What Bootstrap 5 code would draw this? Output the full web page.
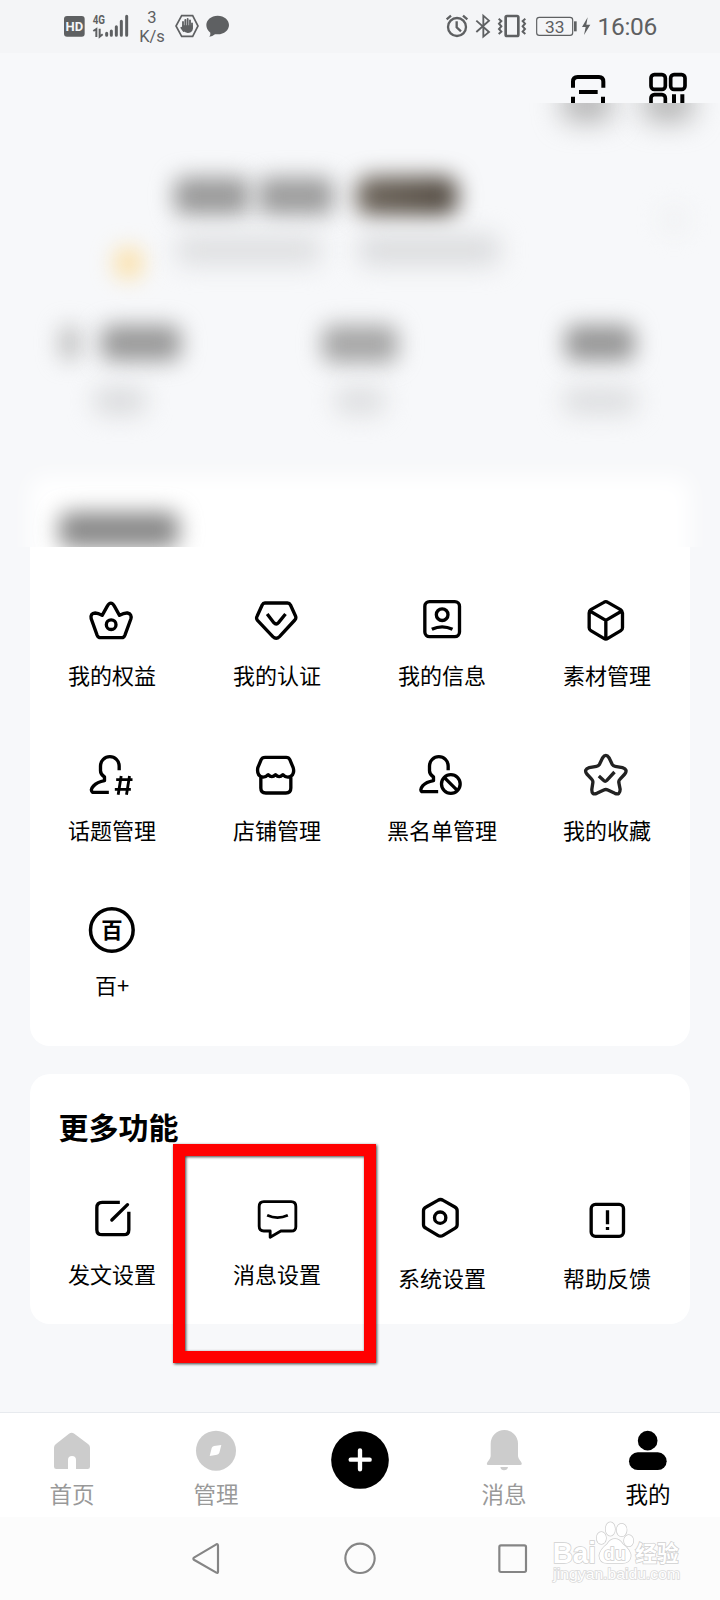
<!DOCTYPE html>
<html lang="zh-CN">
<head>
<meta charset="utf-8">
<meta name="viewport" content="width=device-width, initial-scale=1">
<title>我的</title>
<link rel="stylesheet" href="https://cdn.jsdelivr.net/npm/bootstrap@5.3.0/dist/css/bootstrap.min.css">
<style>
body{width:720px;height:1600px;margin:0;background:#f7f8fa;color:#000;font-family:"Noto Sans CJK SC",sans-serif;overflow:hidden}
svg{display:block;flex:none}
.ln{fill:none;stroke:#000;stroke-width:10;stroke-linejoin:round}
.status{height:53px;background:#f4f5f7;color:#5e6062;font-family:Roboto,sans-serif;padding:0 63px 0 60px}
.rate{width:36px;margin-left:2px;margin-right:2px;font-size:16.5px;line-height:19px;padding-top:8px}
.clock{font-size:24.5px;line-height:54px;letter-spacing:-.3px;margin-left:3px}
.topbar{height:50px}
.veil{height:444px}
.smudge{filter:blur(11px);border-radius:10px;flex:none}
.soft{filter:blur(12px)}
.shade{filter:blur(14px);width:50px;height:34px;background:#b0b0b0;border-radius:10px;margin-top:-16px}
.sheet-top{width:660px;margin:62px auto 0;height:110px;background:#fff;filter:blur(11px);border-radius:14px}
.sheet{width:660px;background:#fff;border:0}
.sheet-main{border-radius:0 0 20px 20px;padding:43px 0 44px}
.sheet-more{border-radius:20px;height:250px;margin-top:28px}
.tiles{display:grid;grid-template-columns:repeat(4,165px);row-gap:53px}
.tile{font-size:22px;line-height:32px}
.tile svg{margin-left:-1px}
.tile span{margin:8px 0 2px -1px}
.tile.low span{margin-top:12px}
.heading{font-size:30px;font-weight:700;line-height:40px;padding:32px 0 0 28.5px;margin:0 0 43px}
.marker{left:143px;top:70px;width:203px;height:219px;border:12px solid #f00;filter:drop-shadow(1px 1px 1.5px rgba(0,0,0,.75))}
.tabs{height:105px;margin-top:88px;background:#fff;border-top:1px solid #e7eaee;font-size:22.5px;line-height:30px;color:#999}
.tabs>div{width:144px;padding-top:12px}
.tabs span{margin-top:-2px}
.sysbar{height:83px;background:#fcfcfc;padding-top:21px}
.sysbar>div{width:153px}
.sys{fill:none;stroke:#858585;stroke-width:6.5;stroke-linejoin:round}
.credit{right:20px;top:3px}
</style>
</head>
<body class="d-flex flex-column">

<header class="status d-flex align-items-start">
  <svg width="72" height="53" viewBox="60 0 216 159">
    <rect x="72" y="48" width="62" height="62" rx="9" fill="#5e6062"/>
    <text x="103" y="92" text-anchor="middle" font-size="37" font-weight="700" textLength="53" lengthAdjust="spacingAndGlyphs" fill="#f4f5f7">HD</text>
    <text x="158" y="73" font-size="38" font-weight="700" textLength="37" lengthAdjust="spacingAndGlyphs" fill="#5e6062">4G</text>
    <path d="M160 93l9-6v24M179 86v24l9-7" fill="none" stroke="#5e6062" stroke-width="6"/>
    <path d="M200 100v6M214 93v13M229 80v26M244 64v42M260 49v57" fill="none" stroke="#5e6062" stroke-width="9" stroke-linecap="round"/>
  </svg>
  <div class="rate text-center">3<br>K/s</div>
  <svg width="62" height="53" viewBox="396 0 186 159">
    <path d="M425 47h33l16 31-16 31h-33l-17-31z" fill="none" stroke="#5e6062" stroke-width="5"/>
    <path d="M429 82V66M436 80V60M443 80V57M450 82V61M424 83l7 10M456 70v15" stroke="#5e6062" stroke-width="5.5" stroke-linecap="round"/>
    <path d="M427 76h31v14q-4 9-15 9-10-1-16-11z" fill="#5e6062"/>
    <path d="M533 47c20 0 34 13 34 28s-14 28-34 28l-8 0q-8 7-17 7 4-6 3-12-12-9-12-23c0-15 14-28 34-28z" fill="#5e6062"/>
  </svg>
  <svg class="ms-auto" width="150" height="53" viewBox="42 0 450 159">
    <g fill="none" stroke="#5e6062" stroke-width="7">
      <circle cx="81" cy="81" r="27"/><path d="M80 64v18l13 12M50 58l13-11M99 47l13 11"/>
      <path d="M139 62l38 34-17 14V47l17 15-38 34" stroke-width="5.5"/>
      <rect x="227" y="48" width="38" height="60" rx="4" stroke-width="8"/>
      <path d="M206 56l8 7-7 8 7 8-7 8 7 8-8 7M286 56l-8 7 7 8-7 8 7 8-7 8 8 7" stroke-width="6"/>
      <rect x="320" y="52" width="108" height="54" rx="8" stroke-width="3.500"/>
      <path d="M436 64v30" stroke-width="8"/>
    </g>
    <text x="374" y="98" text-anchor="middle" font-size="52" fill="#5e6062">33</text>
    <path d="M473 52l-17 29h11l-5 24 19-31h-12z" fill="#5e6062"/>
  </svg>
  <div class="clock">16:06</div>
</header>

<div class="topbar d-flex justify-content-end overflow-hidden">
  <svg width="190" height="50" viewBox="0 9 570 150">
    <path d="M129 113V95q0-14 14-14h64q13 0 13 14v18M129 140v25M219 140v25M147 126h56" class="ln" style="stroke-width:12"/>
    <g class="ln" style="stroke-width:11"><rect x="363" y="74" width="43" height="44" rx="10"/><rect x="422" y="74" width="43" height="44" rx="10"/><rect x="363" y="134" width="43" height="44" rx="10"/><path d="M432 133v40M457 133v40" stroke-width="12"/></g>
  </svg>
</div>

<section class="veil overflow-hidden">
  <div class="d-flex justify-content-end pe-4">
    <div class="shade"></div><div class="shade" style="margin-left:31px;margin-right:3px"></div>
  </div>
  <div class="d-flex align-items-center" style="padding:55px 34px 0 174px">
    <div class="smudge" style="width:76px;height:38px;background:#999"></div>
    <div class="smudge" style="width:76px;height:38px;background:#9c9c9c;margin-left:8px"></div>
    <div class="smudge" style="width:102px;height:40px;border-radius:14px;background:linear-gradient(90deg,#6f675d,#524a41);margin-left:22px"></div>
    <div class="smudge ms-auto" style="width:24px;height:28px;background:#f0f1f3;transform:translateY(24px)"></div>
  </div>
  <div class="d-flex align-items-center" style="padding:5px 0 0 115px">
    <div class="smudge" style="width:27px;height:30px;background:#fbdfa4;margin-top:27px"></div>
    <div class="smudge soft" style="width:146px;height:32px;background:#dfe0e2;margin-left:34px"></div>
    <div class="smudge soft" style="width:142px;height:32px;background:#dcdddf;margin-left:36px"></div>
  </div>
  <div class="row g-0" style="padding-top:47px">
    <div class="col-4 d-flex justify-content-center"><div class="smudge" style="width:20px;height:36px;background:#bcbcbc"></div><div class="smudge" style="width:80px;height:36px;background:#989898;margin-left:21px"></div></div>
    <div class="col-4 d-flex justify-content-center"><div class="smudge" style="width:76px;height:38px;background:#a6a6a6"></div></div>
    <div class="col-4 d-flex justify-content-center"><div class="smudge" style="width:70px;height:36px;background:#969696"></div></div>
  </div>
  <div class="row g-0" style="padding-top:24px">
    <div class="col-4"><div class="smudge soft mx-auto" style="width:52px;height:28px;background:#dadbdd"></div></div>
    <div class="col-4"><div class="smudge soft mx-auto" style="width:50px;height:28px;background:#dddee0"></div></div>
    <div class="col-4"><div class="smudge soft mx-auto" style="width:74px;height:28px;background:#dddee0"></div></div>
  </div>
  <div class="sheet-top"></div>
  <div class="smudge" style="width:120px;height:36px;background:#888;margin:-75px 0 0 59px"></div>
</section>

<main class="d-flex flex-column align-items-center">
  <section class="card sheet sheet-main">
    <div class="tiles">
      <div class="tile d-flex flex-column align-items-center">
        <svg width="60" height="60" viewBox="157.500 30 180 180" class="ln"><path d="M213 173Q206 173 203 166L185 116Q182 100 197 99Q206 99 218 106L233 79Q244 60 255 79L270 106Q284 98 294 99Q308 102 304 117L286 166Q283 173 277 173Z"/><circle cx="245" cy="134" r="14.500"/></svg>
        <span>我的权益</span></div>
      <div class="tile d-flex flex-column align-items-center">
        <svg width="60" height="60" viewBox="652.500 30 180 180" class="ln"><path d="M706 69H774Q780 69 783 75L798 108Q801 115 796 120L750 170Q740 180 730 170L684 121Q679 115 683 108L698 75Q701 69 706 69ZM713 102L733 128Q740 136 747 128L768 102"/></svg>
        <span>我的认证</span></div>
      <div class="tile d-flex flex-column align-items-center">
        <svg width="60" height="60" viewBox="157.500 30 180 180" class="ln"><rect x="196" y="65" width="104" height="105" rx="14"/><circle cx="248" cy="104" r="17.500"/><path d="M217 148Q248 133 279 148"/></svg>
        <span>我的信息</span></div>
      <div class="tile d-flex flex-column align-items-center">
        <svg width="60" height="60" viewBox="652.500 30 180 180" class="ln"><path d="M733 67Q739 63 745 67L783 89Q789 93 789 99V143Q789 149 784 152L745 175Q739 179 733 175L694 152Q689 149 689 143V99Q689 92 694 89ZM691 93L739 121L787 93M739 121V176"/></svg>
        <span>素材管理</span></div>

      <div class="tile d-flex flex-column align-items-center">
        <svg width="60" height="60" viewBox="157.500 45 180 180" class="ln"><path d="M269 121V108A28 28 0 0 0 213 108V122Q213 133 225 141V152Q203 156 192 168Q181 180 189 187H238"/><path d="M260 149H309M256 178H304M275 138L266 194M300 138L291 194" stroke-width="8.500"/></svg>
        <span>话题管理</span></div>
      <div class="tile d-flex flex-column align-items-center">
        <svg width="60" height="60" viewBox="652.500 45 180 180" class="ln"><path d="M707 82H770Q778 82 781 89L791 113Q797 134 779 141Q768 143 760 134Q749 146 738 134Q727 146 716 134Q708 143 697 141Q681 135 685 113L695 89Q698 82 707 82ZM694 142V174Q694 189 709 189H769Q784 189 784 174V142"/></svg>
        <span>店铺管理</span></div>
      <div class="tile d-flex flex-column align-items-center">
        <svg width="60" height="60" viewBox="157.500 45 180 180" class="ln"><path d="M266 121V108A28 28 0 0 0 210 108V122Q210 133 222 141V152Q200 156 190 167Q180 179 187 185H236"/><circle cx="274" cy="162" r="28"/><path d="M254 142L294 182"/></svg>
        <span>黑名单管理</span></div>
      <div class="tile d-flex flex-column align-items-center">
        <svg width="60" height="60" viewBox="652.500 45 180 180" class="ln" style="stroke:#222"><path d="M729 84Q739 68 749 84L758 103Q761 108 767 109L789 113Q806 118 796 132L781 148Q777 152 778 158L782 178Q782 196 766 190L745 180Q739 177 733 180L712 190Q696 196 697 178L700 158Q701 152 697 148L682 132Q672 118 689 113L711 109Q717 108 720 103Z"/><path d="M718 138L732 151Q737 156 742 151L765 126"/></svg>
        <span>我的收藏</span></div>

      <div class="tile d-flex flex-column align-items-center">
        <svg width="60" height="60" viewBox="157.500 510 180 180"><circle cx="247" cy="600" r="64" class="ln" style="stroke-width:10.500"/><text x="247" y="625" text-anchor="middle" font-size="64" font-weight="700">百</text></svg>
        <span>百+</span></div>
    </div>
  </section>

  <section class="card sheet sheet-more position-relative">
    <h2 class="heading">更多功能</h2>
    <div class="tiles">
      <div class="tile d-flex flex-column align-items-center">
        <svg width="60" height="60" viewBox="187.500 387 180 180" class="ln"><path d="M301 427H248Q232 427 232 443V509Q232 524 248 524H313Q328 524 328 509V455"/><path d="M277 480L324 434" stroke-linecap="round"/></svg>
        <span>发文设置</span></div>
      <div class="tile d-flex flex-column align-items-center">
        <svg width="60" height="60" viewBox="682.500 387 180 180" class="ln" style="stroke-width:8.500"><path d="M733 425H815Q829 425 829 440V500Q829 513 815 513H784L752 532V513H733Q719 513 719 499V440Q719 425 733 425ZM743 466Q774 480 805 466"/></svg>
        <span>消息设置</span></div>
      <div class="tile low d-flex flex-column align-items-center">
        <svg width="60" height="60" viewBox="127.500 57 180 180" class="ln"><path d="M205 91Q213 86 221 91L256 111Q263 115 263 122V164Q263 171 256 175L221 196Q213 201 205 196L170 175Q162 171 162 164V122Q162 115 170 111Z"/><circle cx="212" cy="143" r="17"/></svg>
        <span>系统设置</span></div>
      <div class="tile low d-flex flex-column align-items-center">
        <svg width="60" height="60" viewBox="622.500 57 180 180" class="ln"><rect x="665" y="103" width="97" height="96" rx="13"/><path d="M714 121V163M714 171V180" stroke-width="10"/></svg>
        <span>帮助反馈</span></div>
    </div>
    <div class="marker position-absolute"></div>
  </section>
</main>

<nav class="tabs d-flex flex-shrink-0">
  <div class="d-flex flex-column align-items-center">
    <svg width="60" height="55" viewBox="126 75 180 165"><path d="M207 101Q215 95 223 101L265 133Q270 137 270 143V200Q270 207 263 207H228V180Q228 168 216 168Q204 168 204 180V207H169Q162 207 162 200V143Q162 137 167 133Z" fill="#ccc"/></svg>
    <span>首页</span></div>
  <div class="d-flex flex-column align-items-center">
    <svg width="60" height="55" viewBox="558 75 180 165"><circle cx="648" cy="152" r="60" fill="#ccc"/><path d="M664 135L658 158Q656 163 651 164L629 168L635 144Q637 139 642 138Z" fill="#fff"/></svg>
    <span>管理</span></div>
  <div class="d-flex flex-column align-items-center">
    <svg width="60" height="64" viewBox="990 75 180 192"><circle cx="1080" cy="180" r="86.500"/><path d="M1080 151V208M1052 179H1109" stroke="#fff" stroke-width="13" stroke-linecap="round"/></svg></div>
  <div class="d-flex flex-column align-items-center">
    <svg width="60" height="55" viewBox="222 75 180 165"><path d="M272 131A41 41 0 0 1 354 131V168Q354 174 363 185Q369 195 360 195H265Q257 195 263 185Q272 174 272 168ZM301 201H324Q322 211 312 211Q303 211 301 201Z" fill="#ccc"/></svg>
    <span>消息</span></div>
  <div class="d-flex flex-column align-items-center text-black">
    <svg width="60" height="55" viewBox="654 75 180 165"><circle cx="743" cy="122" r="29.500"/><rect x="687" y="157" width="113" height="53" rx="26.500"/></svg>
    <span>我的</span></div>
</nav>

<footer class="sysbar d-flex justify-content-center position-relative flex-shrink-0">
  <div><svg class="sys mx-auto" width="40" height="40" viewBox="561 414 120 120"><path d="M583 472L649 433Q654 431 654 437V515Q654 521 649 518L583 480Q577 476 583 472Z"/></svg></div>
  <div><svg class="sys mx-auto" width="40" height="40" viewBox="1020 414 120 120"><circle cx="1080" cy="475" r="44"/></svg></div>
  <div><svg class="sys mx-auto" width="40" height="40" viewBox="279 414 120 120"><rect x="298" y="436" width="80" height="80" rx="5"/></svg></div>
  <svg class="credit position-absolute" width="150" height="68" viewBox="450 360 450 204" font-family="Liberation Sans, sans-serif" fill="#fff" stroke="#cfcfcf" stroke-width="4.500" paint-order="stroke">
    <text x="458" y="488" font-size="88" font-weight="700" textLength="130" lengthAdjust="spacingAndGlyphs">Bai</text>
    <ellipse cx="604" cy="414" rx="14" ry="18"/><ellipse cx="631" cy="387" rx="14" ry="20"/><ellipse cx="665" cy="390" rx="15" ry="19"/><ellipse cx="686" cy="422" rx="14" ry="17"/>
    <path d="M645 417Q658 417 668 432Q694 452 692 470Q688 490 665 489H622Q599 489 598 467Q600 449 622 432Q631 417 645 417Z"/>
    <text x="644" y="480" text-anchor="middle" font-size="54" font-weight="700">du</text>
    <text x="771" y="482" text-anchor="middle" font-size="65" font-weight="700" font-family="Noto Sans CJK SC, sans-serif">经验</text>
    <text x="460" y="538" font-size="43" textLength="380" lengthAdjust="spacingAndGlyphs" stroke="#dadada">jingyan.baidu.com</text>
  </svg>
</footer>

<script src="https://cdn.jsdelivr.net/npm/bootstrap@5.3.0/dist/js/bootstrap.bundle.min.js"></script>
</body>
</html>
